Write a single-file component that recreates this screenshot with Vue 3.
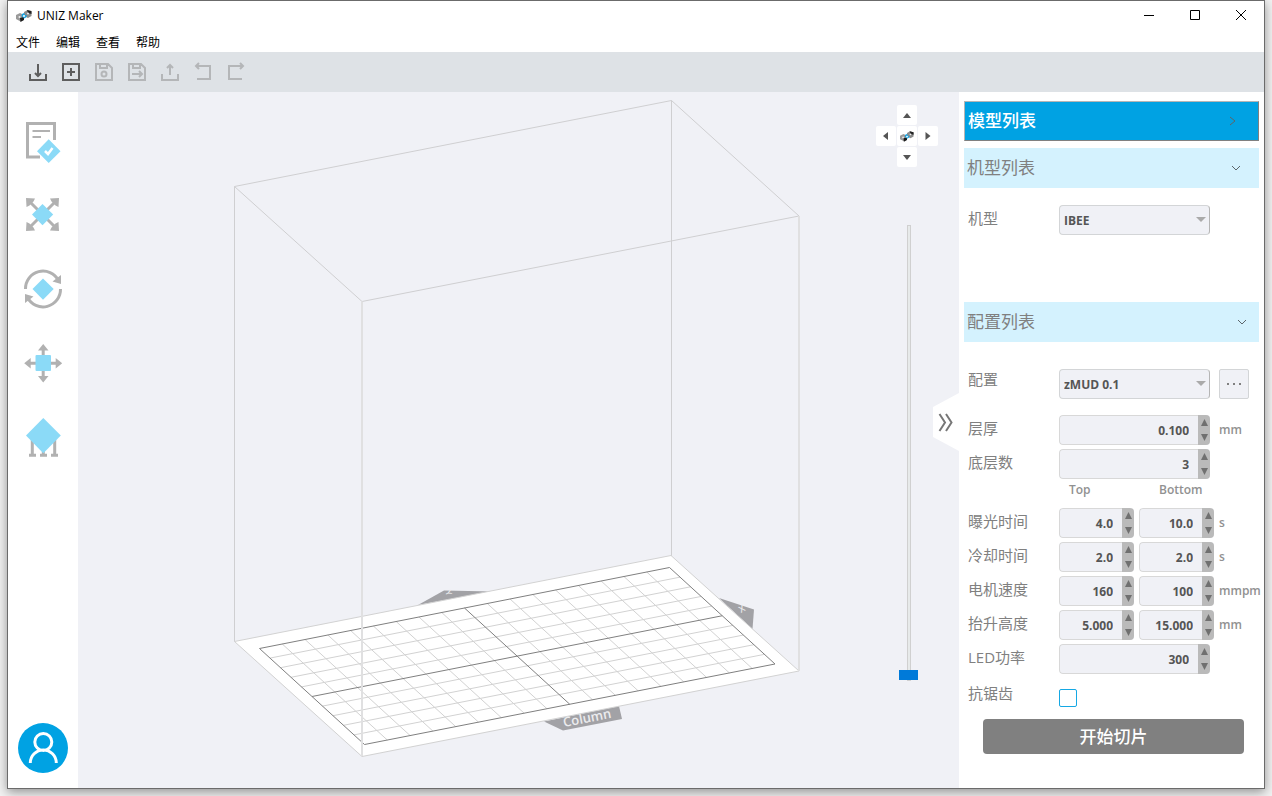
<script setup>
import { ref, reactive } from 'vue'

const menus = ['文件', '编辑', '查看', '帮助']

const tools = [
  { name: '导入', on: true, d: 'M10 2V14M7 11L10 14L13 11M2 12V18H18V12' },
  { name: '新建', on: true, d: 'M2 2H18V18H2ZM10 6V14M6 10H14' },
  { name: '保存', on: false, d: 'M2 2H14L18 6V18H2ZM6 2V6H13V2M7.500 12A2.500 2.500 0 1 0 12.500 12A2.500 2.500 0 1 0 7.500 12Z' },
  { name: '另存为', on: false, d: 'M2 2H14L18 6V18H2ZM6 2V6H13V2M5 12H15M12 9L15 12L12 15' },
  { name: '导出', on: false, d: 'M10 13V3M7 6L10 3L13 6M2 12V18H18V12' },
  { name: '撤销', on: false, d: 'M3 4H17V17H4M6 1L3 4L6 7' },
  { name: '重做', on: false, d: 'M17 4H3V17H16M14 1L17 4L14 7' },
]

const machine = ref('IBEE')
const profile = ref('zMUD 0.1')
const layer = ref(0)
const antialias = ref(false)

const wideRows = [
  { label: '层厚', key: 'thickness', step: 0.01, digits: 3, unit: 'mm' },
  { label: '底层数', key: 'baseLayers', step: 1, digits: 0, unit: '' },
]
const pairRows = [
  { label: '曝光时间', keys: ['exposureTop', 'exposureBottom'], step: 0.5, digits: 1, unit: 's' },
  { label: '冷却时间', keys: ['coolTop', 'coolBottom'], step: 0.5, digits: 1, unit: 's' },
  { label: '电机速度', keys: ['speedTop', 'speedBottom'], step: 10, digits: 0, unit: 'mmpm' },
  { label: '抬升高度', keys: ['liftTop', 'liftBottom'], step: 0.5, digits: 3, unit: 'mm' },
]
const ledRows = [{ label: 'LED功率', key: 'led', step: 10, digits: 0, unit: '' }]

const form = reactive({
  thickness: '0.100', baseLayers: '3',
  exposureTop: '4.0', exposureBottom: '10.0',
  coolTop: '2.0', coolBottom: '2.0',
  speedTop: '160', speedBottom: '100',
  liftTop: '5.000', liftBottom: '15.000',
  led: '300',
})
function bump(key, row, dir) {
  form[key] = Math.max(0, Number(form[key]) + dir * row.step).toFixed(row.digits)
}

// Build plate grid, interpolated between the corners of the printable area
const TL = [259.5, 648.5], TR = [669.5, 567.5], BR = [775, 664], BL = [364.5, 744.5]
const mix = (a, b, t) => [a[0] + (b[0] - a[0]) * t, a[1] + (b[1] - a[1]) * t]
const seg = (a, b) => `M${a[0]} ${a[1]}L${b[0]} ${b[1]}`
let minor = ''
let major = ''
for (let i = 0; i <= 18; i++) {
  const s = seg(mix(TL, TR, i / 18), mix(BL, BR, i / 18))
  if (i % 9 === 0) major += s
  else minor += s
}
for (let i = 0; i <= 10; i++) {
  const s = seg(mix(TL, BL, i / 10), mix(TR, BR, i / 10))
  if (i % 5 === 0) major += s
  else minor += s
}
</script>

<template>
  <div class="desktop">
    <div class="window">
      <svg class="defs" width="0" height="0" aria-hidden="true">
        <symbol id="logo" viewBox="0 0 16 12">
          <path d="M8 2L11.500 0L15.500 1.500V6L12 8L8 6Z" fill="#8b8b8b" />
          <path d="M11 0L15.500 1V4L12 3Z" fill="#222" />
          <path d="M0 5L4 3L8 5V9.500L4.500 11.500L0 9Z" fill="#9a9a9a" />
          <path d="M4 8L8 7V10L4.500 12Z" fill="#1b1b1b" />
          <path d="M6 4L8 3L9 5L11 5.500L10 7.500L8 8.500L7 7L5.500 6.500Z" fill="#16a5e4" />
          <circle cx="12" cy="3.500" r="1" fill="#eee" />
          <circle cx="3.500" cy="7" r="1" fill="#eee" />
          <circle cx="8" cy="6" r="1" fill="#fff" />
        </symbol>
      </svg>

      <header class="titlebar">
        <svg class="app-logo"><use href="#logo" /></svg>
        <h1 class="app-title">UNIZ Maker</h1>
        <div class="win-buttons">
          <button aria-label="最小化"><svg viewBox="0 0 12 12"><path d="M1 5.500H11" /></svg></button>
          <button aria-label="最大化"><svg viewBox="0 0 12 12"><path d="M1.500 0.500H10.500V9.500H1.500Z" /></svg></button>
          <button aria-label="关闭"><svg viewBox="0 0 12 12"><path d="M1 0L11 10M11 0L1 10" /></svg></button>
        </div>
      </header>

      <nav class="menubar">
        <button v-for="m in menus" :key="m">{{ m }}</button>
      </nav>

      <div class="toolbar">
        <button v-for="t in tools" :key="t.name" :aria-label="t.name" :disabled="!t.on">
          <svg viewBox="0 0 20 20"><path :d="t.d" /></svg>
        </button>
      </div>

      <div class="body">
        <aside class="sidebar">
          <button class="side" aria-label="模型检查">
            <svg viewBox="0 0 50 50">
              <path class="line" d="M22 41H9.500V7.500H36.500V24" />
              <path class="line thin" d="M14.500 15H32M14.500 21H23" />
              <path class="blue" d="M30.700 23.300L42.500 35.200L30.700 47L19 35.200Z" />
              <path d="M27 35L30 38L34.500 32" fill="none" stroke="#fff" stroke-width="2.500" />
            </svg>
          </button>
          <button class="side" aria-label="缩放">
            <svg viewBox="0 0 50 50">
              <path class="line" d="M11 11L38 38M38 11L11 38" />
              <path class="gray" d="M8 8L17 8.500L15.500 11.500L11.500 15.500L8.500 17ZM41 8L32 8.500L33.500 11.500L37.500 15.500L40.500 17ZM8 41L17 40.500L15.500 37.500L11.500 33.500L8.500 32ZM41 41L32 40.500L33.500 37.500L37.500 33.500L40.500 32Z" />
              <path class="blue" d="M24.500 14L35.200 24.500L24.500 35.200L14 24.500Z" />
            </svg>
          </button>
          <button class="side" aria-label="旋转">
            <svg viewBox="0 0 50 50">
              <path class="line" d="M7.500 25A17.500 17.500 0 0 1 40.500 16.500M42.500 25A17.500 17.500 0 0 1 9.500 33.500" />
              <path class="gray" d="M43 11V20L34.500 17.500ZM7 39V30L15.500 32.500Z" />
              <path class="blue" d="M25 14.500L35.700 25L25 35.700L14.500 25Z" />
            </svg>
          </button>
          <button class="side" aria-label="移动">
            <svg viewBox="0 0 50 50">
              <path class="line" d="M25.200 10V40M10 25.200H40" />
              <path class="gray" d="M25.200 6L30.500 12.500H20ZM25.200 44.500L30.500 38H20ZM6.200 25.200L12.700 20V30.500ZM44.200 25.200L37.700 20V30.500Z" />
              <rect class="blue" x="17.500" y="17" width="15.500" height="16" rx="1" />
            </svg>
          </button>
          <button class="side" aria-label="支撑">
            <svg viewBox="0 0 50 50">
              <path class="line" d="M14.300 26V43M25.300 37V43M36.700 26V43M11 43.200H18M22 43.200H29M33 43.200H40" />
              <path class="blue" d="M25.300 6L42.800 23.600L25.300 41.200L8 23.600Z" />
            </svg>
          </button>
          <button class="user" aria-label="用户">
            <svg viewBox="0 0 50 50"><path d="M16.800 19A8.500 8.500 0 1 0 33.800 19A8.500 8.500 0 1 0 16.800 19ZM12.300 40A13 13 0 0 1 38.300 40" /></svg>
          </button>
        </aside>

        <main class="stage">
          <svg class="scene" viewBox="78 92 881 696" role="img" aria-label="打印平台">
            <g fill="#a2a2a6">
              <path d="M418 605L444 590.500L492 591.500Z" />
              <path d="M719 598L754 609.500L752.500 629Z" />
              <path d="M544 721.500L563 730.500L622 719L619 706Z" />
            </g>
            <path d="M671.500 100.500V556" stroke="#cfcfd1" fill="none" />
            <path d="M234.500 641.500L671 555.500L799 671L362 756.500Z" fill="#fff" stroke="#d2d2d2" />
            <path :d="minor" class="minor" />
            <path :d="major" class="major" />
            <path d="M234.500 641.500V186.500L671.500 100.500L799 216L362 301.500L234.500 186.500" fill="none" stroke="#cfcfd1" />
            <path d="M362 301.500V756M799 216V671" fill="none" stroke="#e0e0e1" stroke-width="2" />
            <text transform="translate(564 727) rotate(-11)" font-size="13">Column</text>
            <text transform="translate(445 592) rotate(65)" font-size="8">Y</text>
            <text transform="translate(741 613) rotate(-30)" font-size="9">X</text>
          </svg>

          <div class="pad">
            <button class="up" aria-label="上"><svg viewBox="0 0 20 20"><path d="M6 13H14L10 8Z" /></svg></button>
            <button class="left" aria-label="左"><svg viewBox="0 0 20 20"><path d="M12 6V14L7 10Z" /></svg></button>
            <button class="home" aria-label="重置视角"><svg class="pad-logo"><use href="#logo" /></svg></button>
            <button class="right" aria-label="右"><svg viewBox="0 0 20 20"><path d="M7.500 6V14L12.500 10Z" /></svg></button>
            <button class="down" aria-label="下"><svg viewBox="0 0 20 20"><path d="M6 8H14L10 13Z" /></svg></button>
          </div>
          <input v-model="layer" class="layer" type="range" min="0" max="100" aria-label="层" />
          <button class="collapse" aria-label="收起面板">
            <svg viewBox="0 0 26 58"><path d="M6.500 21L12 29.500L6.500 38M13 21L18.500 29.500L13 38" /></svg>
          </button>
        </main>

        <section class="panel">
          <button class="head models">
            <span>模型列表</span>
            <svg viewBox="0 0 10 10"><path d="M2 1L7 5L2 9" /></svg>
          </button>
          <button class="head machines">
            <span>机型列表</span>
            <svg viewBox="0 0 10 10"><path d="M1 3L5 7L9 3" /></svg>
          </button>
          <div class="group machine-group">
            <div class="row">
              <label for="machine">机型</label>
              <div class="select">
                <select id="machine" v-model="machine"><option>IBEE</option></select>
              </div>
            </div>
          </div>
          <button class="head profiles">
            <span>配置列表</span>
            <svg viewBox="0 0 10 10"><path d="M1 3L5 7L9 3" /></svg>
          </button>
          <div class="group profile-group">
            <div class="row profile-row">
              <label for="profile">配置</label>
              <div class="select">
                <select id="profile" v-model="profile"><option>zMUD 0.1</option></select>
              </div>
              <button class="more" aria-label="更多"><i></i><i></i><i></i></button>
            </div>

            <div v-for="r in wideRows" :key="r.key" class="row">
              <label :for="r.key">{{ r.label }}</label>
              <div class="spin wide">
                <input :id="r.key" v-model="form[r.key]" type="text" inputmode="decimal" />
                <div class="steps">
                  <button aria-label="增加" @click="bump(r.key, r, 1)"><svg viewBox="0 0 8 8"><path d="M4 0L8 8H0Z" /></svg></button>
                  <button aria-label="减少" @click="bump(r.key, r, -1)"><svg viewBox="0 0 8 8"><path d="M0 0H8L4 8Z" /></svg></button>
                </div>
              </div>
              <span class="unit">{{ r.unit }}</span>
            </div>

            <div class="columns"><span>Top</span><span>Bottom</span></div>

            <div v-for="r in pairRows" :key="r.label" class="row">
              <label :for="r.keys[0]">{{ r.label }}</label>
              <div v-for="k in r.keys" :key="k" class="spin">
                <input :id="k" v-model="form[k]" type="text" inputmode="decimal" :aria-label="r.label" />
                <div class="steps">
                  <button aria-label="增加" @click="bump(k, r, 1)"><svg viewBox="0 0 8 8"><path d="M4 0L8 8H0Z" /></svg></button>
                  <button aria-label="减少" @click="bump(k, r, -1)"><svg viewBox="0 0 8 8"><path d="M0 0H8L4 8Z" /></svg></button>
                </div>
              </div>
              <span class="unit">{{ r.unit }}</span>
            </div>

            <div v-for="r in ledRows" :key="r.key" class="row">
              <label :for="r.key">{{ r.label }}</label>
              <div class="spin wide">
                <input :id="r.key" v-model="form[r.key]" type="text" inputmode="decimal" />
                <div class="steps">
                  <button aria-label="增加" @click="bump(r.key, r, 1)"><svg viewBox="0 0 8 8"><path d="M4 0L8 8H0Z" /></svg></button>
                  <button aria-label="减少" @click="bump(r.key, r, -1)"><svg viewBox="0 0 8 8"><path d="M0 0H8L4 8Z" /></svg></button>
                </div>
              </div>
            </div>

            <div class="row check-row">
              <label for="aa">抗锯齿</label>
              <input id="aa" v-model="antialias" type="checkbox" />
            </div>
          </div>
          <button class="slice">开始切片</button>
        </section>
      </div>
    </div>
  </div>
</template>

<style>
body {
  margin: 0;
  background: #f2f2f2;
}
</style>

<style scoped>
.desktop {
  box-sizing: border-box;
  min-height: 100vh;
  padding: 0 7px 7px;
  display: flex;
  overflow: hidden;
  font-family: "Open Sans", "Noto Sans CJK SC", sans-serif;
  color: #808080;
}
button, input, select {
  font: inherit;
  color: inherit;
  margin: 0;
  padding: 0;
  border: 0;
  background: none;
  box-sizing: border-box;
}
svg {
  display: block;
}
.defs {
  position: absolute;
}
.window {
  flex: 1;
  min-width: 0;
  display: flex;
  flex-direction: column;
  border: 1px solid #6b6b6b;
  background: #fff;
  box-shadow: 0 3px 10px rgba(0, 0, 0, 0.4);
}

.titlebar {
  height: 29px;
  display: flex;
  align-items: center;
  padding-left: 8px;
  color: #000;
}
.app-logo {
  width: 16px;
  height: 12px;
}
.app-title {
  margin: 0 0 0 5px;
  font-size: 12px;
  font-weight: 400;
  line-height: 16px;
}
.win-buttons {
  margin-left: auto;
  display: flex;
}
.win-buttons button {
  width: 46px;
  height: 28px;
  display: flex;
  align-items: center;
  justify-content: center;
}
.win-buttons svg {
  width: 12px;
  height: 12px;
  fill: none;
  stroke: #000;
}

.menubar {
  height: 22px;
  box-sizing: border-box;
  display: flex;
  align-items: center;
  gap: 16px;
  padding: 3px 0 0 8px;
  font-size: 12px;
  color: #000;
}
.menubar button {
  line-height: 16px;
}

.toolbar {
  height: 40px;
  display: flex;
  align-items: center;
  padding-left: 13px;
  background: #dee2e6;
}
.toolbar button {
  width: 33px;
  height: 33px;
  display: flex;
  align-items: center;
  justify-content: center;
}
.toolbar svg {
  width: 20px;
  height: 20px;
  fill: none;
  stroke: #5e5e5e;
  stroke-width: 2;
}
.toolbar button:disabled svg {
  stroke: #b4b6b8;
}

.body {
  flex: 1;
  min-height: 0;
  display: flex;
}
.sidebar {
  width: 70px;
  box-sizing: border-box;
  padding: 12px 0 15px;
  display: flex;
  flex-direction: column;
  align-items: center;
}
.side {
  width: 50px;
  height: 74px;
  display: flex;
  align-items: center;
}
.side svg, .user svg {
  width: 50px;
  height: 50px;
}
.line {
  fill: none;
  stroke: #b1b1b1;
  stroke-width: 3;
}
.thin {
  stroke-width: 2;
}
.gray {
  fill: #b1b1b1;
}
.blue {
  fill: #8bdaf7;
}
.user {
  margin-top: auto;
  border-radius: 50%;
  background: #00a2e3;
}
.user path {
  fill: none;
  stroke: #fff;
  stroke-width: 3;
}

.stage {
  flex: 1;
  min-width: 0;
  position: relative;
  background: #f0f1f6;
}
.scene {
  position: absolute;
  inset: 0;
  width: 100%;
  height: 100%;
}
.scene text {
  fill: #ececee;
  font-family: "Open Sans", sans-serif;
  font-weight: 600;
}
.minor {
  fill: none;
  stroke: #d2d2d2;
}
.major {
  fill: none;
  stroke: #808080;
}
.pad {
  position: absolute;
  top: 13px;
  right: 21px;
  display: grid;
  grid-template-columns: repeat(3, 20px);
  grid-template-rows: repeat(3, 20px);
  gap: 1px;
}
.pad button {
  display: flex;
  align-items: center;
  justify-content: center;
  background: #fff;
  border-radius: 2px;
}
.pad svg {
  width: 20px;
  height: 20px;
  fill: #555;
}
.pad .pad-logo {
  width: 14px;
  height: 11px;
}
.up { grid-area: 1 / 2; }
.left { grid-area: 2 / 1; }
.home { grid-area: 2 / 2; }
.right { grid-area: 2 / 3; }
.down { grid-area: 3 / 2; }

.layer {
  position: absolute;
  top: 133px;
  right: 41px;
  bottom: 107px;
  width: 19px;
  appearance: none;
  writing-mode: vertical-lr;
  direction: rtl;
}
.layer::-webkit-slider-runnable-track {
  width: 4px;
  height: 100%;
  box-sizing: border-box;
  border: 1px solid #d0d0d0;
  background: #e7eaea;
}
.layer::-webkit-slider-thumb {
  appearance: none;
  width: 19px;
  height: 10px;
  margin-left: -9px;
  background: #007ad9;
}
.collapse {
  position: absolute;
  top: 301px;
  right: 0;
  width: 26px;
  height: 58px;
  background: #fff;
  clip-path: polygon(0 14px, 100% 0, 100% 100%, 0 44px);
}
.collapse path {
  fill: none;
  stroke: #777;
  stroke-width: 2;
}

.panel {
  width: 305px;
  box-sizing: border-box;
  padding: 9px 5px 0;
  display: flex;
  flex-direction: column;
}
.head {
  height: 40px;
  display: flex;
  align-items: center;
  justify-content: space-between;
  padding-left: 3px;
  background: #d4f2fe;
  font-size: 17px;
}
.head span {
  padding-bottom: 3px;
}
.head svg {
  width: 10px;
  height: 10px;
  fill: none;
  stroke: #5c666b;
}
.models {
  border: 1px solid;
  border-color: #b5b5b5 #808080 #808080 #b5b5b5;
  background: #00a2e3;
  color: #fff;
  font-weight: 500;
  padding-right: 20px;
}
.machines {
  margin-top: 7px;
  padding-right: 18px;
}
.profiles {
  padding-right: 12px;
}
.group {
  padding-left: 4px;
  display: flex;
  flex-direction: column;
  gap: 4px;
}
.machine-group {
  padding-top: 17px;
  padding-bottom: 67px;
}
.profile-group {
  padding-top: 27px;
}
.row {
  display: flex;
  align-items: center;
}
.row > * {
  flex-shrink: 0;
}
.row label {
  box-sizing: border-box;
  width: 91px;
  padding-bottom: 4px;
  font-size: 15px;
  line-height: 20px;
}
.profile-row {
  margin-bottom: 12px;
}
.profile-row label {
  padding-bottom: 10px;
}
.select {
  position: relative;
  width: 151px;
}
.select::after {
  content: "";
  position: absolute;
  right: 4px;
  top: 12px;
  border: 5px solid transparent;
  border-top-color: #aaa;
  border-bottom: 0;
  pointer-events: none;
}
select {
  appearance: none;
  display: block;
  width: 100%;
  height: 30px;
  padding-left: 4px;
  border: 1px solid #d3d5d7;
  border-right-color: #b5b5b5;
  border-radius: 4px;
  background: #f0f1f6;
  color: #555;
  font-size: 12px;
  font-weight: 700;
}
.more {
  width: 30px;
  height: 30px;
  margin-left: 9px;
  display: flex;
  align-items: center;
  justify-content: center;
  gap: 4px;
  border: 1px solid #d3d5d7;
  border-radius: 2px;
  background: #f0f1f6;
}
.more i {
  width: 2px;
  height: 2px;
  background: #808080;
}
.spin {
  width: 75px;
  height: 30px;
  display: flex;
  box-sizing: border-box;
  overflow: hidden;
  border-radius: 4px;
  background: #f0f1f6;
}
.spin + .spin {
  margin-left: 5px;
}
.wide {
  width: 151px;
}
.spin input {
  flex: 1;
  min-width: 0;
  padding-right: 9px;
  border: 1px solid #d8d8d8;
  border-right: 0;
  border-radius: 4px 0 0 4px;
  text-align: right;
  color: #555;
  font-size: 12px;
  font-weight: 700;
}
.steps {
  width: 12px;
  display: flex;
  flex-direction: column;
  background: #bababa;
}
.steps button {
  flex: 1;
  display: flex;
  align-items: center;
  justify-content: center;
}
.steps svg {
  width: 7px;
  height: 7px;
  fill: #707070;
}
.unit {
  font-size: 12px;
  font-weight: 600;
  line-height: 20px;
  color: #919191;
  margin-left: 5px;
}
.wide + .unit {
  margin-left: 9px;
}
.columns {
  display: flex;
  gap: 5px;
  height: 21px;
  padding-left: 91px;
  font-size: 12px;
  font-weight: 600;
  line-height: 14px;
  color: #919191;
}
.columns span {
  width: 65px;
  padding-left: 10px;
}
.columns span + span {
  padding-left: 20px;
}
.check-row {
  height: 38px;
}
.check-row label {
  padding-bottom: 8px;
}
.check-row input {
  appearance: none;
  width: 18px;
  height: 18px;
  margin-top: 2px;
  border: 1px solid #15a8e4;
  border-radius: 2px;
  background: #fff;
}
.slice {
  height: 35px;
  margin: 3px 15px 0 19px;
  padding-bottom: 3px;
  border-radius: 4px;
  background: #808080;
  color: #fff;
  font-size: 17px;
  font-weight: 500;
}
</style>
